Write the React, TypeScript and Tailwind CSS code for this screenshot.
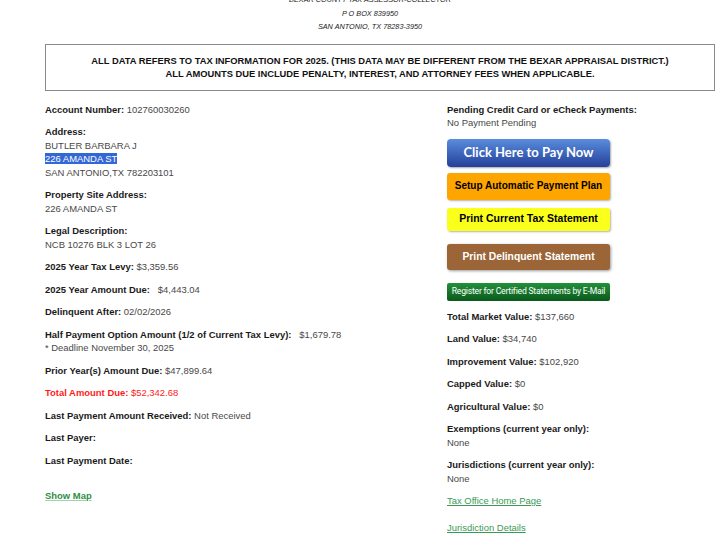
import React from 'react';

type Field = { label: string; value?: string; gap?: string; red?: boolean };

// Single "Label: value" line of the account page
function Line({ label, value, gap = ' ', red }: Field) {
  return (
    <p className={`mb-[9px] ${red ? 'text-[#ff1a1a]' : 'text-[#484848]'}`}>
      <span className={`font-bold ${red ? '' : 'text-[#1a1a1a]'}`}>{label}</span>
      {value ? gap + value : ''}
    </p>
  );
}

function Block({ label, lines }: { label: string; lines: React.ReactNode[] }) {
  return (
    <div className="mb-[9px] text-[#484848]">
      <p className="font-bold text-[#1a1a1a]">{label}</p>
      {lines.map((l, i) => (
        <p key={i}>{l}</p>
      ))}
    </div>
  );
}

export default function App() {
  return (
    <div className="w-[720px] h-[539px] overflow-hidden bg-white font-['Liberation_Sans',Arial,sans-serif]">
      {/* letterhead */}
      <div className="-mt-[7px] text-center italic text-[7.3px] leading-[13.5px] text-[#1a1a1a]">
        <p className="pl-[20px]">BEXAR COUNTY TAX ASSESSOR-COLLECTOR</p>
        <p className="pl-[20px]">P O BOX 839950</p>
        <p className="pl-[20px]">SAN ANTONIO, TX 78283-3950</p>
      </div>

      <div className="ml-[45px] mt-[10px] w-[670px] border border-[#8a8a8a] pt-[10px] pb-[9px] text-center font-bold text-[9.35px] leading-[13px] text-[#111]">
        <p>ALL DATA REFERS TO TAX INFORMATION FOR 2025. (THIS DATA MAY BE DIFFERENT FROM THE BEXAR APPRAISAL DISTRICT.)</p>
        <p>ALL AMOUNTS DUE INCLUDE PENALTY, INTEREST, AND ATTORNEY FEES WHEN APPLICABLE.</p>
      </div>

      <div className="ml-[45px] mt-[12px] flex text-[9.45px] leading-[13.5px]">
        {/* left column */}
        <div className="w-[402px]">
          <Line label="Account Number:" value="102760030260" />
          <Block
            label="Address:"
            lines={[
              'BUTLER BARBARA J',
              <span key="sel" className="bg-[#3367d6] text-white">226 AMANDA ST</span>,
              'SAN ANTONIO,TX 782203101',
            ]}
          />
          <Block label="Property Site Address:" lines={['226 AMANDA ST']} />
          <Block label="Legal Description:" lines={['NCB 10276 BLK 3 LOT 26']} />
          <Line label="2025 Year Tax Levy:" value="$3,359.56" />
          <Line label="2025 Year Amount Due:" value="$4,443.04" gap={'\u00a0\u00a0 '} />
          <Line label="Delinquent After:" value="02/02/2026" />
          <div className="mb-[9px] text-[#484848]">
            <p>
              <span className="font-bold text-[#1a1a1a]">Half Payment Option Amount (1/2 of Current Tax Levy):</span>
              {'\u00a0\u00a0 '}$1,679.78
            </p>
            <p>* Deadline November 30, 2025</p>
          </div>
          <Line label="Prior Year(s) Amount Due:" value="$47,899.64" />
          <Line label="Total Amount Due:" value="$52,342.68" red />
          <Line label="Last Payment Amount Received:" value="Not Received" />
          <Line label="Last Payer:" />
          <Line label="Last Payment Date:" />
          <a className="mt-[22px] block font-bold text-[#2f8f45] underline decoration-[#9fd3ae]">Show Map</a>
        </div>

        {/* right column */}
        <div className="w-[268px]">
          <Block label="Pending Credit Card or eCheck Payments:" lines={['No Payment Pending']} />

          <div className="flex w-[163px] flex-col">
            <button className="h-[28px] rounded-[4px] bg-linear-to-b from-[#5a8ddc] to-[#26409a] font-['Lato',sans-serif] text-[13px] font-bold text-white shadow-[1px_1px_2px_rgba(0,0,0,0.35)]">
              Click Here to Pay Now
            </button>
            <button className="mt-[6px] h-[27px] rounded-[3px] bg-[#ffa500] text-[10px] font-bold text-black shadow-[1px_1px_2px_rgba(0,0,0,0.3)]">
              Setup Automatic Payment Plan
            </button>
            <button className="mt-[8px] h-[23px] rounded-[3px] bg-[#fbff1c] text-[10.5px] font-bold text-black shadow-[1px_1px_2px_rgba(0,0,0,0.3)]">
              Print Current Tax Statement
            </button>
            <button className="mt-[13px] h-[26px] rounded-[3px] bg-[#9b6537] text-[10.3px] font-bold text-white shadow-[1px_1px_3px_rgba(0,0,0,0.4)]">
              Print Delinquent Statement
            </button>
            <button className="mt-[13px] h-[18px] rounded-[2px] bg-linear-to-b from-[#22913a] to-[#0b5a1c] font-['Liberation_Sans_Narrow','Roboto',sans-serif] text-[8.6px] tracking-[-0.2px] text-white">
              Register for Certified Statements by E-Mail
            </button>
          </div>

          <div className="mt-[9px]">
            <Line label="Total Market Value:" value="$137,660" />
            <Line label="Land Value:" value="$34,740" />
            <Line label="Improvement Value:" value="$102,920" />
            <Line label="Capped Value:" value="$0" />
            <Line label="Agricultural Value:" value="$0" />
            <Block label="Exemptions (current year only):" lines={['None']} />
            <Block label="Jurisdictions (current year only):" lines={['None']} />
            <a className="mb-[13px] block text-[#3a9a56] underline">Tax Office Home Page</a>
            <a className="block text-[#3a9a56] underline">Jurisdiction Details</a>
          </div>
        </div>
      </div>
    </div>
  );
}
